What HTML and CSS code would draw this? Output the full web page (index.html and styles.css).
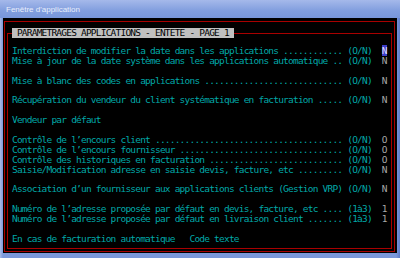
FILE: index.html
```html
<!DOCTYPE html>
<html lang="fr">
<head>
    <meta charset="UTF-8">
    <title>Fenêtre d'application</title>
    <link rel="stylesheet" href="styles.css">
</head>
<body>
    <div class="window">
        <div class="titlebar">Fenêtre d'application</div>
        <div class="client">
            <div class="frame">
                <fieldset class="page">
                    <legend class="heading"> PARAMETRAGES APPLICATIONS - ENTETE - PAGE 1 </legend>
                    <div class="screen">
                        <div class="line">Interdiction de modifier la date dans les applications ............ (O/N)  <span class="val cursor">N</span></div>
                        <div class="line">Mise à jour de la date système dans les applications automatique .. (O/N)  <span class="val">N</span></div>
                        <div class="line"></div>
                        <div class="line">Mise à blanc des codes en applications ............................ (O/N)  <span class="val">N</span></div>
                        <div class="line"></div>
                        <div class="line">Récupération du vendeur du client systématique en facturation ..... (O/N)  <span class="val">N</span></div>
                        <div class="line"></div>
                        <div class="line">Vendeur par défaut</div>
                        <div class="line"></div>
                        <div class="line">Contrôle de l’encours client ...................................... (O/N)  <span class="val">O</span></div>
                        <div class="line">Contrôle de l’encours fournisseur ................................. (O/N)  <span class="val">O</span></div>
                        <div class="line">Contrôle des historiques en facturation ........................... (O/N)  <span class="val">O</span></div>
                        <div class="line">Saisie/Modification adresse en saisie devis, facture, etc ......... (O/N)  <span class="val">N</span></div>
                        <div class="line"></div>
                        <div class="line">Association d’un fournisseur aux applications clients (Gestion VRP) (O/N)  <span class="val">N</span></div>
                        <div class="line"></div>
                        <div class="line">Numéro de l’adresse proposée par défaut en devis, facture, etc .... (1à3)  <span class="val">1</span></div>
                        <div class="line">Numéro de l’adresse proposée par défaut en livraison client ....... (1à3)  <span class="val">1</span></div>
                        <div class="line"></div>
                        <div class="line">En cas de facturation automatique   Code texte</div>
                    </div>
                </fieldset>
            </div>
        </div>
    </div>
</body>
</html>
```

FILE: styles.css
```css
* {
    margin: 0;
    padding: 0;
    box-sizing: border-box;
}

body {
    width: 400px;
    height: 258px;
    overflow: hidden;
    background: #7b98da;
}

.window {
    height: 258px;
    display: flex;
    flex-direction: column;
    background: linear-gradient(90deg, #a9bbe6 0, #7b98da 3px, #7b98da 396px, #5d7cc8 400px);
}

.titlebar {
    height: 18px;
    padding-left: 6px;
    line-height: 20px;
    font-family: "Liberation Sans", sans-serif;
    font-size: 8px;
    color: #e8eefc;
    background: linear-gradient(#a5b9ea, #819ede 60%, #7896da);
}

.client {
    flex: 1;
    display: flex;
    margin: 0 3px 5px 3px;
    padding: 3px 2px 1px 1px;
    background: #000;
}

.frame {
    flex: 1;
    display: flex;
    border: 1px solid #a80000;
    padding: 6px 2px 2px 2px;
}

.page {
    flex: 1;
    min-width: 0;
    border: 1px solid #a80000;
    padding: 8px 0 0 4px;
}

.heading {
    margin: 0;
    padding: 0;
    height: 10px;
    line-height: 10px;
    background: #c0c0c0;
    color: #000;
    white-space: pre;
    font-family: "DejaVu Sans Mono", monospace;
    font-size: 9.5px;
    letter-spacing: -0.79px;
}

.screen {
    font-family: "DejaVu Sans Mono", monospace;
    font-size: 9.5px;
    letter-spacing: -0.79px;
    color: #00a8a8;
}

.line {
    height: 9.9px;
    line-height: 9.9px;
    white-space: pre;
}

.val {
    color: #a8a8a8;
}

.val.cursor {
    background: #3c3cc8;
    color: #e0e0ff;
}
```
